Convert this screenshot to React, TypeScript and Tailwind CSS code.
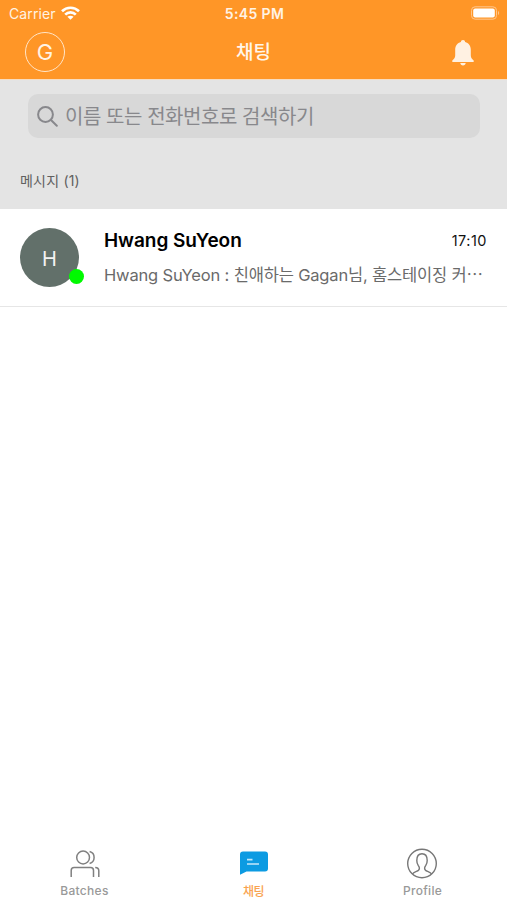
import React from "react";

interface TabProps {
  label: string;
  active?: boolean;
  children: React.ReactNode;
}

const Tab: React.FC<TabProps> = (props) => {
  return (
    <button className="flex flex-1 flex-col items-center">
      {props.children}
      <span
        className={
          props.active
            ? "mt-[5px] text-[12px] leading-4 font-medium tracking-[-0.5px] text-[#f9a350]"
            : "mt-1 text-[12px] leading-4 font-medium tracking-[0.3px] text-[#999]"
        }
      >
        {props.label}
      </span>
    </button>
  );
};

const StatusBar = () => (
  <div className="grid h-7 grid-cols-3 items-center pr-[7px] pl-[9px] text-[#fff3e4]">
    <div className="flex items-center gap-[5px]">
      <span className="text-[14px] leading-5 tracking-[0.1px]">Carrier</span>
      <svg className="-mt-[2px]" width="19" height="14" viewBox="0 0 19 14" fill="none" stroke="#fff" strokeWidth="2.7">
        <path d="M1 5.2C5.8.6 13.2.6 18 5.2" />
        <path d="M4.2 8.6c3-2.9 7.6-2.9 10.6 0" />
        <path d="M9.5 13.8 6.4 10.8c1.7-1.5 4.5-1.5 6.2 0z" fill="#fff" stroke="none" />
      </svg>
    </div>
    <span className="text-center text-[14px] leading-5 font-semibold tracking-[0.35px]">5:45 PM</span>
    <svg className="-mt-[2px] justify-self-end" width="30" height="14" viewBox="0 0 30 14">
      <rect x="1.5" y="0.8" width="25" height="12.4" rx="3.6" fill="none" stroke="#ffc78e" />
      <rect x="3.2" y="2.6" width="21.6" height="8.8" rx="2" fill="#fff" />
      <path d="M28 5c1.5.6 1.5 3.4 0 4z" fill="#ffc78e" />
    </svg>
  </div>
);

const Header = () => (
  <header className="h-20 border-b border-[#f7dcc0] bg-[#ff9627]">
    <StatusBar />
    <div className="flex h-12 items-center justify-between pr-[33px] pl-[25px]">
      <div className="flex h-10 w-10 items-center justify-center rounded-full border-[1.5px] border-[#ffe5c8] text-[22px] text-[#fff3e4]">
        G
      </div>
      <h1 className="mt-[2px] -ml-[10px] text-[19px] font-medium text-[#fff6ea]">채팅</h1>
      <svg className="mt-[2px]" width="22" height="26" viewBox="0 0 22 26" fill="#fff1e2">
        <path d="M11 0c1.3 0 2.1.9 2.1 2.1 3.5 1 5.7 3.9 5.7 7.6v5.8c0 2.2 1.2 3.5 2.6 4.8.9.8.6 1.7-.5 1.7H1.1c-1.1 0-1.4-.9-.5-1.7 1.4-1.3 2.6-2.6 2.6-4.8V9.7c0-3.7 2.2-6.6 5.7-7.6C8.9.9 9.7 0 11 0z" />
        <path d="M8.3 23.1h5.4c-.1 1.5-1.2 2.4-2.7 2.4s-2.6-.9-2.7-2.4z" />
      </svg>
    </div>
  </header>
);

const Search = () => (
  <div className="h-[129px] bg-[#e4e4e4] px-7 pt-[14px]">
    <div className="-mr-px flex h-[44px] items-center rounded-[10px] bg-[#d8d8d8] pl-[9px] text-[#88888c]">
      <svg width="21" height="21" viewBox="0 0 21 21" fill="none" stroke="currentColor" strokeWidth="2">
        <circle cx="8.5" cy="8.5" r="7.4" />
        <path d="m14 14 5.8 5.8" strokeLinecap="round" />
      </svg>
      <span className="mt-[2px] ml-[7px] text-[20px] tracking-[-0.45px] whitespace-nowrap">
        이름 또는 전화번호로 검색하기
      </span>
    </div>
    <p className="mt-[33px] -ml-2 text-[14px] leading-5 tracking-[0.2px] text-[#606060]">메시지 (1)</p>
  </div>
);

const ChatRow = () => (
  <div className="flex h-[98px] border-b border-[#e6e6e6] pr-5 pl-5">
    <div className="relative mt-[19px] flex h-[59px] w-[59px] shrink-0 items-center justify-center rounded-full bg-[#62706a] pt-[2px] text-[20px] text-[#f2f2f2]">
      H
      <span className="absolute right-[-5px] bottom-[3px] h-[15px] w-[15px] rounded-full bg-[#00fa00]" />
    </div>
    <div className="ml-[25px] min-w-0 flex-1">
      <div className="mt-[19px] flex items-center justify-between">
        <span className="text-[19px] leading-[26px] font-semibold tracking-[-0.05px] text-black">Hwang SuYeon</span>
        <span className="text-[14.5px] leading-[26px] tracking-[0.5px] text-[#111]">17:10</span>
      </div>
      <p className="mt-[9px] text-[16.5px] leading-6 tracking-[-0.17px] whitespace-nowrap text-[#6a6a6a]">
        Hwang SuYeon : 친애하는 Gagan님, 홈스테이징 커⋯
      </p>
    </div>
  </div>
);

const TabBar = () => (
  <nav className="mt-auto flex h-[53px]">
    <Tab label="Batches">
      <svg width="30" height="32" viewBox="0 0 30 32" fill="none" stroke="#808080" strokeWidth="1.5">
        <circle cx="13.1" cy="10.5" r="6.4" />
        <path d="M19.6 4.5c6 1.6 6 10.4 0 12" />
        <path d="M1.2 30V23.4c0-1.9 1-2.9 2.9-2.9h16.5c1.9 0 2.9 1 2.9 2.9V30" />
        <path d="M25.2 20.5c2.4 0 3.6 1.1 3.6 3.3V30" />
      </svg>
    </Tab>
    <Tab label="채팅" active>
      <svg width="30" height="32" viewBox="0 0 30 32">
        <path d="M4 4.4h22c2 0 3 1 3 3v14c0 2-1 3-3 3H7.5L1 27.7V7.4c0-2 1-3 3-3z" fill="#0c9be2" />
        <path d="M8 12.6h5.5M8 17h12" stroke="#c3e8fa" strokeWidth="1.6" />
      </svg>
    </Tab>
    <Tab label="Profile">
      <svg className="-ml-px" width="32" height="32" viewBox="0 0 32 32" fill="none" stroke="#777" strokeWidth="1.4">
        <circle cx="16" cy="16.5" r="14.3" />
        <path d="M6.4 27c.7-1.3 2.2-1.9 4-2.6 2.4-.9 3-1.5 3-3.2 0-1.2-.5-1.8-1.2-2.8-.8-1.2-1.4-2.8-1.4-5 0-4.4 1.8-6.7 5.2-6.7s5.2 2.3 5.2 6.7c0 2.2-.6 3.8-1.4 5-.7 1-1.2 1.6-1.2 2.8 0 1.7.6 2.3 3 3.2 1.8.7 3.3 1.3 4 2.6" />
      </svg>
    </Tab>
  </nav>
);

const App: React.FC = () => {
  return (
    <div className="flex h-screen w-full flex-col overflow-hidden bg-white font-['Inter','Noto_Sans_CJK_KR',sans-serif]">
      <Header />
      <Search />
      <ChatRow />
      <TabBar />
    </div>
  );
};

export default App;
